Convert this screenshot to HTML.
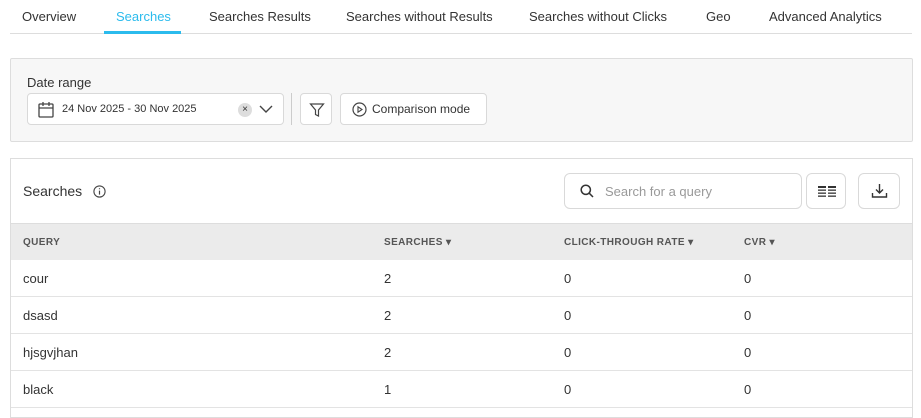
<!DOCTYPE html>
<html><head><style>
*{box-sizing:border-box;margin:0;padding:0}
body{width:921px;height:413px;overflow:hidden;background:#fff;font-family:"Liberation Sans",sans-serif;color:#333;position:relative}
.abs{position:absolute}
.tab{position:absolute;top:9px;font-size:13px;color:#333}
.btn{position:absolute;border:1px solid #d9d9d9;border-radius:4px;background:#fff}
.row{position:absolute;left:11px;width:901px;height:37px;border-bottom:1px solid #e3e3e3;font-size:13px}
.row span{position:absolute;top:11px}
.th{position:absolute;top:237px;font-size:10px;font-weight:bold;color:#555;letter-spacing:.4px}
</style></head><body>
<div class="tab" style="left:22px">Overview</div>
<div class="tab" style="left:116px;color:#2bbbed">Searches</div>
<div class="tab" style="left:209px">Searches Results</div>
<div class="tab" style="left:346px">Searches without Results</div>
<div class="tab" style="left:529px">Searches without Clicks</div>
<div class="tab" style="left:706px">Geo</div>
<div class="tab" style="left:769px">Advanced Analytics</div>
<div class="abs" style="left:10px;top:33px;width:902px;height:1px;background:#ddd"></div>
<div class="abs" style="left:104px;top:31px;width:77px;height:3px;background:#2bbbed"></div>

<div class="abs" style="left:10px;top:58px;width:903px;height:84px;background:#f7f7f7;border:1px solid #ddd;border-radius:2px"></div>
<div class="abs" style="left:27px;top:75px;font-size:13px">Date range</div>
<div class="btn" style="left:27px;top:93px;width:257px;height:32px">
<svg class="abs" style="left:10px;top:7px" width="16" height="17" viewBox="0 0 16 17" fill="none" stroke="#444" stroke-width="1.3"><rect x="1" y="3" width="14" height="13" rx="1"/><path d="M1 7h14M5 1v4M11 1v4"/></svg>
<span class="abs" style="left:34px;top:9px;font-size:11px">24 Nov 2025 - 30 Nov 2025</span>
<div class="abs" style="left:210px;top:9px;width:14px;height:14px;border-radius:7px;background:#ddd;font-size:10px;text-align:center;line-height:14px">×</div>
<svg class="abs" style="left:231px;top:11px" width="14" height="9"><path d="M1 1l6 6 6-6" fill="none" stroke="#444" stroke-width="1.4"/></svg>
</div>
<div class="abs" style="left:291px;top:93px;width:1px;height:32px;background:#ccc"></div>
<div class="btn" style="left:300px;top:93px;width:32px;height:32px">
<svg class="abs" style="left:8px;top:8px" width="16" height="16"><path d="M1.5 2h13l-5 6v6l-3-1.5V8z" fill="none" stroke="#444" stroke-width="1.2"/></svg></div>
<div class="btn" style="left:340px;top:93px;width:147px;height:32px">
<svg class="abs" style="left:11px;top:8px" width="15" height="15"><circle cx="7.5" cy="7.5" r="6.5" fill="none" stroke="#444" stroke-width="1.2"/><path d="M6 4.8v5.4l4-2.7z" fill="none" stroke="#444" stroke-width="1.1"/></svg>
<span class="abs" style="left:31px;top:8px;font-size:12px;color:#333">Comparison mode</span></div>

<div class="abs" style="left:10px;top:158px;width:903px;height:260px;border:1px solid #ddd"></div>
<div class="abs" style="left:23px;top:183px;font-size:14px">Searches</div>
<svg class="abs" style="left:93px;top:185px" width="13" height="13"><circle cx="6.5" cy="6.5" r="5.6" fill="none" stroke="#444" stroke-width="1.1"/><path d="M6.5 5.6v4M6.5 3.3v1" stroke="#444" stroke-width="1.2"/></svg>
<div class="btn" style="left:564px;top:173px;width:238px;height:36px;border-radius:6px">
<svg class="abs" style="left:15px;top:10px" width="14" height="14"><circle cx="5.8" cy="5.8" r="4.6" fill="none" stroke="#333" stroke-width="1.5"/><path d="M9.2 9.2l3.8 3.8" stroke="#333" stroke-width="1.5"/></svg>
<span class="abs" style="left:40px;top:10px;font-size:13px;color:#999">Search for a query</span></div>
<div class="btn" style="left:806px;top:173px;width:40px;height:36px;border-radius:6px">
<svg class="abs" style="left:11px;top:12px" width="18" height="12" fill="#333"><rect x="0" y="0" width="8" height="2"/><rect x="10" y="0" width="8" height="2"/><rect x="0" y="3.5" width="8" height="1.3"/><rect x="10" y="3.5" width="8" height="1.3"/><rect x="0" y="6.5" width="8" height="1.3"/><rect x="10" y="6.5" width="8" height="1.3"/><rect x="0" y="9.5" width="8" height="1.3"/><rect x="10" y="9.5" width="8" height="1.3"/></svg></div>
<div class="btn" style="left:858px;top:173px;width:42px;height:36px;border-radius:6px">
<svg class="abs" style="left:12px;top:9px" width="17" height="16" fill="none" stroke="#333" stroke-width="1.4"><path d="M8.5 1v9M5 6.5l3.5 3.5 3.5-3.5M1.5 10v4h14v-4"/></svg></div>

<div class="abs" style="left:11px;top:223px;width:901px;height:37px;background:#ebebeb;border-top:1px solid #ddd"></div>
<div class="th" style="left:23px">QUERY</div>
<div class="th" style="left:384px">SEARCHES ▾</div>
<div class="th" style="left:564px">CLICK-THROUGH RATE ▾</div>
<div class="th" style="left:744px">CVR ▾</div>

<div class="row" style="top:260px"><span style="left:12px">cour</span><span style="left:373px">2</span><span style="left:553px">0</span><span style="left:733px">0</span></div>
<div class="row" style="top:297px"><span style="left:12px">dsasd</span><span style="left:373px">2</span><span style="left:553px">0</span><span style="left:733px">0</span></div>
<div class="row" style="top:334px"><span style="left:12px">hjsgvjhan</span><span style="left:373px">2</span><span style="left:553px">0</span><span style="left:733px">0</span></div>
<div class="row" style="top:371px"><span style="left:12px">black</span><span style="left:373px">1</span><span style="left:553px">0</span><span style="left:733px">0</span></div>
</body></html>
